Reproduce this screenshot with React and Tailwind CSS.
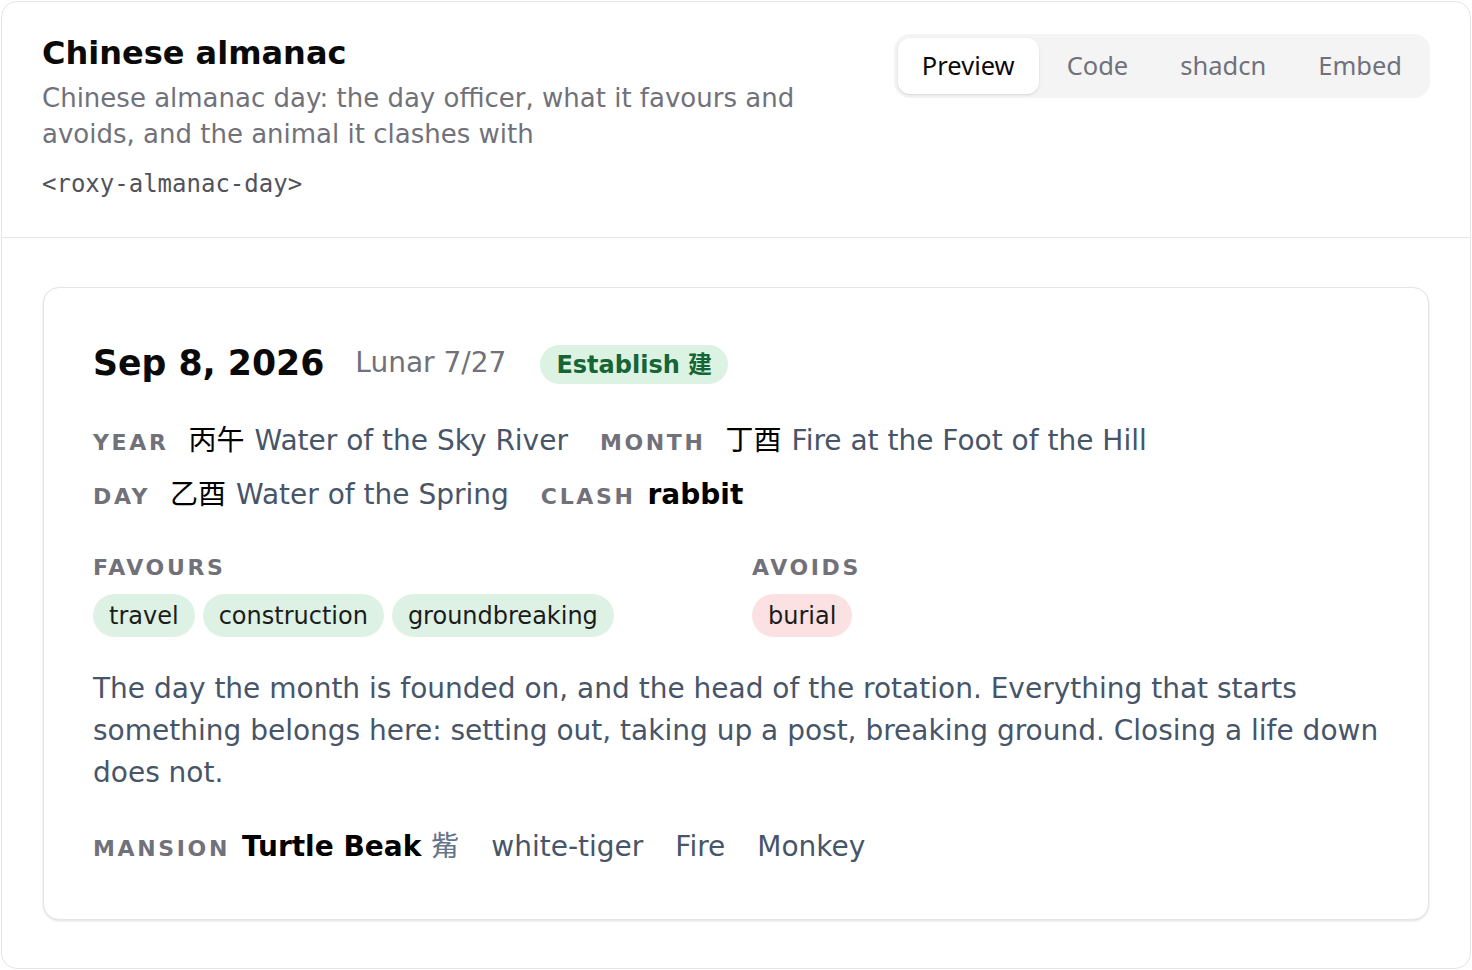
const SANS = { fontFamily: '"DejaVu Sans", "Noto Sans CJK SC", sans-serif' };
const MONO = { fontFamily: '"DejaVu Sans Mono", monospace' };
const TAB = { fontFamily: '"Noto Sans", "DejaVu Sans", sans-serif' };

function Label({ children, className = '' }) {
  return (
    <span className={`text-[22px] font-bold uppercase tracking-[0.12em] text-[#71717a] ${className}`}>
      {children}
    </span>
  );
}

function Chip({ children, tone }) {
  const cls = tone === 'bad' ? 'bg-[#fbe1e1]' : 'bg-[#ddf2e4]';
  return (
    <span className={`inline-flex h-[43px] items-center rounded-full px-4 text-[24px] text-[#1c1c1c] ${cls}`}>
      {children}
    </span>
  );
}

function Pillar({ label, stem, name }) {
  return (
    <span className="flex items-baseline">
      <Label className="mr-[20px]">{label}</Label>
      <span className="text-[28px] text-black">{stem}</span>
      <span className="ml-[10px] text-[28px] text-[#475569]">{name}</span>
    </span>
  );
}

export default function App() {
  const tabs = ['Preview', 'Code', 'shadcn', 'Embed'];
  return (
    <div className="bg-white p-px" style={SANS}>
      <div className="h-[968px] rounded-2xl border border-[#e5e5e5] bg-white">
        {/* header */}
        <div className="flex items-start justify-between border-b border-[#e5e5e5] px-10 pb-[39px] pt-8">
          <div className="max-w-[800px]">
            <h1 className="text-[32px] font-bold leading-[38px] text-[#0a0a0a]">Chinese almanac</h1>
            <p className="mt-[8px] text-[26px] leading-[36px] text-[#71717a]">
              Chinese almanac day: the day officer, what it favours and avoids, and the animal it clashes with
            </p>
            <div className="mt-[18px] text-[24px] leading-[28px] text-[#52525b]" style={MONO}>
              &lt;roxy-almanac-day&gt;
            </div>
          </div>
          <div className="flex gap-1 rounded-2xl bg-[#f4f4f5] p-1" style={TAB}>
            {tabs.map((t, i) => (
              <button
                key={t}
                className={
                  i === 0
                    ? 'h-14 rounded-xl bg-white px-6 pb-px text-[25.5px] text-[#0a0a0a] shadow-sm'
                    : 'h-14 rounded-xl px-6 pb-px text-[25.5px] text-[#71717a]'
                }
              >
                {t}
              </button>
            ))}
          </div>
        </div>

        {/* body */}
        <div className="px-[41px] pt-[49px]">
          <div className="rounded-2xl border border-[#e5e5e5] bg-white px-[49px] pb-[48px] pt-[53px] shadow-sm">
            <div className="flex items-center">
              <span className="text-[34.7px] font-bold leading-[44px] text-[#0a0a0a]">Sep 8, 2026</span>
              <span className="ml-[31px] text-[28px] text-[#71717a]">Lunar 7/27</span>
              <span className="ml-[34px] mt-[3px] inline-flex h-[39px] items-center rounded-full bg-[#dcf2e3] px-4 text-[24px] font-bold text-[#166534]">
                Establish 建
              </span>
            </div>

            <div className="mt-[36px] flex flex-wrap gap-x-[32px] leading-[40px]">
              <Pillar label="Year" stem="丙午" name="Water of the Sky River" />
              <Pillar label="Month" stem="丁酉" name="Fire at the Foot of the Hill" />
            </div>
            <div className="mt-[12px] flex flex-wrap gap-x-[32px] leading-[40px]">
              <Pillar label="Day" stem="乙酉" name="Water of the Spring" />
              <span className="flex items-baseline">
                <Label className="mr-[12px]">Clash</Label>
                <span className="text-[28px] font-bold text-black">rabbit</span>
              </span>
            </div>

            <div className="mt-[36px] grid grid-cols-2 gap-x-8">
              <div>
                <Label className="block leading-[30px]">Favours</Label>
                <div className="mt-[11px] flex flex-wrap gap-2">
                  <Chip>travel</Chip>
                  <Chip>construction</Chip>
                  <Chip>groundbreaking</Chip>
                </div>
              </div>
              <div>
                <Label className="block leading-[30px]">Avoids</Label>
                <div className="mt-[11px] flex flex-wrap gap-2">
                  <Chip tone="bad">burial</Chip>
                </div>
              </div>
            </div>

            <p className="mt-[31px] text-[28px] leading-[42px] text-[#475569]">
              The day the month is founded on, and the head of the rotation. Everything that starts something
              belongs here: setting out, taking up a post, breaking ground. Closing a life down does not.
            </p>

            <div className="mt-[31px] flex items-baseline gap-x-[32px] leading-[44px]">
              <span className="flex items-baseline">
                <Label className="mr-[12px]">Mansion</Label>
                <span className="text-[28px] font-bold text-black">Turtle Beak</span>
                <span className="ml-[10px] text-[28px] text-[#64748b]">觜</span>
              </span>
              <span className="text-[28px] text-[#475569]">white-tiger</span>
              <span className="text-[28px] text-[#475569]">Fire</span>
              <span className="text-[28px] text-[#475569]">Monkey</span>
            </div>
          </div>
        </div>
      </div>
    </div>
  );
}
